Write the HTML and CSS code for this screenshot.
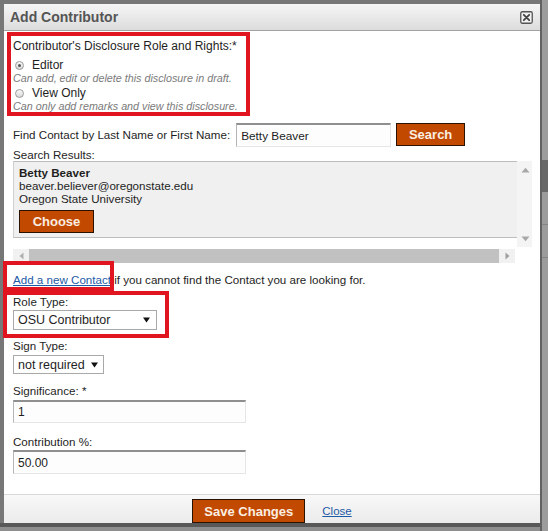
FILE: index.html
```html
<!DOCTYPE html>
<html lang="en">
<head>
<meta charset="utf-8">
<title>Add Contributor</title>
<link rel="stylesheet" href="styles.css">
</head>
<body>
<div class="dialog">
  <div class="titlebar">
    <span class="title">Add Contributor</span>
    <svg class="close-icon" width="13" height="13" viewBox="0 0 13 13">
      <rect x="0.75" y="0.75" width="11.5" height="11.5" rx="1.5" fill="#f2f2f2" stroke="#555" stroke-width="1.3"/>
      <path d="M3.8 3.8 L9.2 9.2 M9.2 3.8 L3.8 9.2" stroke="#444" stroke-width="1.8" stroke-linecap="round"/>
    </svg>
  </div>

  <div class="content">
    <div class="rights">
      <div class="rights-label">Contributor's Disclosure Role and Rights:*</div>
      <div class="radio-row first"><span class="radio checked"></span><span>Editor</span></div>
      <div class="note">Can add, edit or delete this disclosure in draft.</div>
      <div class="radio-row"><span class="radio"></span><span>View Only</span></div>
      <div class="note last">Can only add remarks and view this disclosure.</div>
    </div>

    <div class="find-row">
      <span class="find-label">Find Contact by Last Name or First Name:</span>
      <div class="textbox find-input">Betty Beaver</div>
      <div class="btn btn-search">Search</div>
    </div>

    <div class="results-label">Search Results:</div>
    <div class="results">
      <div class="results-box">
        <div class="r-name">Betty Beaver</div>
        <div class="r-line">beaver.believer@oregonstate.edu</div>
        <div class="r-line">Oregon State University</div>
        <div class="btn btn-choose">Choose</div>
      </div>
      <div class="vscroll">
        <svg width="9" height="6" viewBox="0 0 9 6"><path d="M0.5 5.5 L4.5 0.8 L8.5 5.5 Z" fill="#a8a8a8"/></svg>
        <svg width="9" height="6" viewBox="0 0 9 6"><path d="M0.5 0.5 L4.5 5.2 L8.5 0.5 Z" fill="#a8a8a8"/></svg>
      </div>
      <div class="hscroll">
        <div class="h-arrow"><svg width="5" height="8" viewBox="0 0 5 8"><path d="M4.5 0.5 L0.5 4 L4.5 7.5 Z" fill="#b0b0b0"/></svg></div>
        <div class="h-thumb"></div>
        <div class="h-arrow"><svg width="5" height="8" viewBox="0 0 5 8"><path d="M0.5 0.5 L4.5 4 L0.5 7.5 Z" fill="#a0a0a0"/></svg></div>
      </div>
    </div>

    <div class="link-row"><a class="link" href="#">Add a new Contact</a> if you cannot find the Contact you are looking for.</div>

    <div class="field-label role-label">Role Type:</div>
    <div class="select role-select">
      <span>OSU Contributor</span>
      <svg width="7" height="6" viewBox="0 0 7 6"><path d="M0 0.5 L7 0.5 L3.5 5.5 Z" fill="#111"/></svg>
    </div>

    <div class="field-label sign-label">Sign Type:</div>
    <div class="select sign-select">
      <span>not required</span>
      <svg width="7" height="6" viewBox="0 0 7 6"><path d="M0 0.5 L7 0.5 L3.5 5.5 Z" fill="#111"/></svg>
    </div>

    <div class="field-label sig-label">Significance: *</div>
    <div class="textbox wide sig-input">1</div>

    <div class="field-label contrib-label">Contribution %:</div>
    <div class="textbox wide contrib-input">50.00</div>
  </div>

  <div class="footer">
    <div class="btn btn-save">Save Changes</div>
    <a class="link close-link" href="#">Close</a>
  </div>

  <div class="mark mark-link"></div>
  <div class="mark mark-role"></div>
</div>
<div class="pagebar"></div>
</body>
</html>
```

FILE: styles.css
```css
html, body {
  margin: 0;
  padding: 0;
}
body {
  width: 548px;
  height: 531px;
  overflow: hidden;
  display: flex;
  align-items: flex-start;
  font-family: "Liberation Sans", Arial, sans-serif;
  color: #1e1e1e;
  background: linear-gradient(to bottom, #777 0, #777 523px, #585858 523px, #585858 527px, #8e8e8e 527px);
}

.dialog {
  position: relative;
  width: 536px;
  height: 519px;
  margin: 4px 0 0 4px;
  background: #fff;
  display: flex;
  flex-direction: column;
}

.pagebar {
  width: 8px;
  height: 531px;
  background:
    linear-gradient(to right, #626262 0, #626262 2px, transparent 2px),
    linear-gradient(to bottom, #9c9c9c 0, #9c9c9c 160px, #686868 160px, #686868 192px, #9c9c9c 192px, #9c9c9c 224px, #858585 224px, #858585 225px, #9c9c9c 225px, #9c9c9c 257px, #858585 257px, #858585 258px, #9c9c9c 258px);
}

/* title bar */
.titlebar {
  height: 26px;
  flex: none;
  display: flex;
  align-items: center;
  justify-content: space-between;
  padding: 0 7px 0 6px;
  background: linear-gradient(to bottom, #f6f6f6, #dcdcdc);
  border-bottom: 1px solid #a2a2a2;
}
.title {
  font-size: 14px;
  font-weight: bold;
  color: #555;
  line-height: 26px;
}
.close-icon {
  display: block;
  margin-top: 1px;
}

/* content */
.content {
  flex: 1;
  padding-left: 9px;
  font-size: 11.6px;
}

.rights {
  width: 233px;
  height: 76px;
  margin: 1px 0 0 -6px;
  padding-left: 2px;
  border: 4px solid #e0151f;
}
.rights-label {
  margin-top: 2px;
  line-height: 16px;
  font-size: 12px;
}
.radio-row {
  display: flex;
  align-items: center;
  height: 14px;
  margin-top: 1px;
  font-size: 12px;
}
.radio-row.first {
  margin-top: 4px;
}
.radio {
  box-sizing: border-box;
  width: 9px;
  height: 9px;
  margin: 0 8px 0 2px;
  border-radius: 50%;
  border: 1px solid #9a9a9a;
  background: linear-gradient(to bottom, #fafafa, #d8d8d8);
  display: flex;
  align-items: center;
  justify-content: center;
}
.radio.checked::after {
  content: "";
  width: 3px;
  height: 3px;
  border-radius: 50%;
  background: #555;
}
.note {
  font-style: italic;
  font-size: 10.75px;
  color: #7a7a7a;
  line-height: 14px;
}
.note:not(.last) {
  line-height: 13px;
}
.note.last {
  line-height: 12px;
}

.find-row {
  display: flex;
  align-items: flex-start;
  margin-top: 7px;
  height: 24px;
}
.find-label {
  line-height: 24px;
  margin-right: 6px;
}

.textbox {
  box-sizing: border-box;
  background: #fdfdfd;
  border-top: 2px solid #8f8f8f;
  border-left: 1px solid #b5b5b5;
  border-right: 1px solid #e6e6e6;
  border-bottom: 1px solid #e6e6e6;
  padding-left: 4px;
  font-size: 12px;
  display: flex;
  align-items: center;
}
.find-input {
  width: 155px;
  height: 24px;
  font-size: 11.8px;
}

.btn {
  box-sizing: border-box;
  background: #c24a00;
  border: 1px solid #2a1200;
  color: #fbeee2;
  font-weight: bold;
  font-size: 13px;
  display: flex;
  align-items: center;
  justify-content: center;
}
.btn-search {
  width: 69px;
  height: 23px;
  margin-left: 5px;
}

.results-label {
  margin-top: 1px;
  line-height: 13px;
}

.results {
  display: grid;
  grid-template-columns: 504px 15px;
  grid-template-rows: 88px 14px;
  width: 519px;
  height: 102px;
}
.results-box {
  box-sizing: border-box;
  height: 77px;
  background: #f0f0f0;
  border-top: 1px solid #bdbdbd;
  border-bottom: 1px solid #bdbdbd;
  border-left: 1px solid #d0d0d0;
  padding: 4px 0 0 5px;
}
.r-name {
  font-weight: bold;
  line-height: 13px;
}
.r-line {
  line-height: 13px;
}
.btn-choose {
  width: 75px;
  height: 23px;
  margin-top: 5px;
}
.vscroll {
  height: 86px;
  background: #f4f4f4;
  display: flex;
  flex-direction: column;
  align-items: center;
  justify-content: space-between;
  padding: 6px 0 5px;
  box-sizing: border-box;
}
.vscroll svg {
  display: block;
  margin-left: 2px;
}
.hscroll {
  width: 502px;
  height: 14px;
  display: flex;
  background: #f1f1f1;
}
.h-arrow {
  width: 16px;
  display: flex;
  align-items: center;
  justify-content: center;
}
.h-arrow svg {
  display: block;
}
.h-thumb {
  flex: 1;
  background: #c1c1c1;
}

.link-row {
  margin-top: 10px;
  line-height: 14px;
}
.link {
  color: #1d5aa6;
  text-decoration: underline;
}

.field-label {
  line-height: 14px;
}
.role-label {
  margin-top: 7px;
  line-height: 15px;
}
.sign-label {
  margin-top: 9px;
}
.sig-label {
  margin-top: 10px;
}
.contrib-label {
  margin-top: 12px;
}

.select {
  box-sizing: border-box;
  border: 1px solid #a9a9a9;
  background: #fff;
  font-size: 12.5px;
  display: flex;
  align-items: center;
  justify-content: space-between;
  padding-left: 4px;
}
.select svg {
  display: block;
}
.role-select {
  width: 144px;
  height: 20px;
  margin-top: 1px;
  padding-right: 6px;
}
.sign-select {
  width: 91px;
  height: 19px;
  margin-top: 2px;
  padding-right: 5px;
}

.wide {
  width: 233px;
}
.sig-input {
  height: 23px;
  margin-top: 2px;
}
.contrib-input {
  height: 24px;
  margin-top: 1px;
}

/* footer */
.footer {
  flex: none;
  height: 28px;
  border-top: 1px solid #d9d9d9;
  background: linear-gradient(to bottom, #f8f8f8, #ebebeb);
  display: flex;
  justify-content: center;
  align-items: flex-end;
}
.btn-save {
  width: 113px;
  height: 24px;
}
.close-link {
  margin-left: 17px;
  font-size: 11.5px;
  line-height: 24px;
}

/* red annotation boxes */
.mark {
  position: absolute;
  box-sizing: border-box;
  border: 4px solid #e0151f;
  pointer-events: none;
}
.mark-link {
  left: -1px;
  top: 257px;
  width: 111px;
  height: 30px;
}
.mark-role {
  left: -1px;
  top: 287px;
  width: 166px;
  height: 47px;
}
```
